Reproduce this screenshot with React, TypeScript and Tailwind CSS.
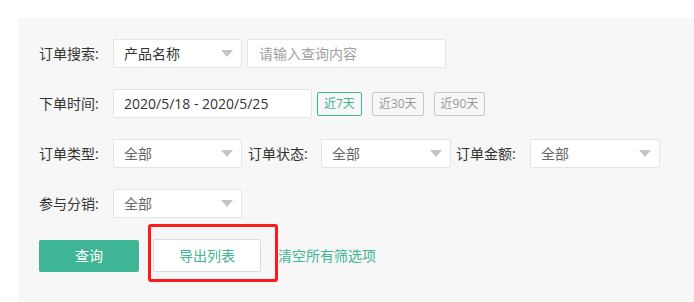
import { ReactNode } from "react";

const font = { fontFamily: '"Open Sans", "Noto Sans CJK SC", sans-serif' };

function Arrow() {
	return (
		<svg width="12" height="7" viewBox="0 0 12 7" className="shrink-0">
			<path d="M0 0 L12 0 L6 7 Z" fill="#c4c4c4" />
		</svg>
	);
}

function Select({ value, dark = false, wide = false }: { value: string; dark?: boolean; wide?: boolean }) {
	return (
		<div
			className={`flex h-[29px] shrink-0 items-center justify-between rounded-[2px] border border-[#e5e5e5] bg-white pl-[10px] pr-[8px] ${
				wide ? "w-[130px]" : "w-[129px]"
			}`}
		>
			<span className={dark ? "text-[#333]" : "text-[#666]"}>{value}</span>
			<Arrow />
		</div>
	);
}

function Label({ children, className = "" }: { children: ReactNode; className?: string }) {
	return <div className={`shrink-0 text-[#333] ${className}`}>{children}</div>;
}

function Quick({ text, active = false }: { text: string; active?: boolean }) {
	return (
		<div
			className={
				active
					? "flex h-[24px] items-center justify-center rounded-[2px] border border-[#3eb595] px-[6px] text-[12px] text-[#3eb595]"
					: "flex h-[24px] items-center justify-center rounded-[2px] border border-[#c8c8c8] px-[6px] text-[12px] text-[#999]"
			}
		>
			{text}
		</div>
	);
}

export default function App() {
	return (
		<div className="h-[302px] w-[694px] overflow-hidden bg-white text-[14px]" style={font}>
			<div className="ml-[19px] mt-[18px] flex h-[284px] flex-col gap-[21px] bg-[#f7f7f7] pl-[20px] pt-[21px]">
				{/* 订单搜索 */}
				<div className="flex h-[29px] items-center">
					<Label className="w-[74px]">订单搜索:</Label>
					<Select value="产品名称" dark />
					<div className="ml-[5px] flex h-[29px] w-[199px] items-center rounded-[2px] border border-[#e5e5e5] bg-white pl-[11px] text-[#a0a0a0]">
						请输入查询内容
					</div>
				</div>

				{/* 下单时间 */}
				<div className="flex h-[29px] items-center">
					<Label className="w-[74px]">下单时间:</Label>
					<div className="flex h-[29px] w-[199px] items-center rounded-[2px] border border-[#e5e5e5] bg-white pl-[10px] text-[#333]">
						2020/5/18 - 2020/5/25
					</div>
					<div className="ml-[5px] flex items-center gap-[10px]">
						<Quick text="近7天" active />
						<Quick text="近30天" />
						<Quick text="近90天" />
					</div>
				</div>

				{/* 类型 / 状态 / 金额 */}
				<div className="flex h-[29px] items-center">
					<Label className="w-[74px]">订单类型:</Label>
					<Select value="全部" />
					<Label className="ml-[6px] w-[73px]">订单状态:</Label>
					<Select value="全部" wide />
					<Label className="ml-[5px] w-[74px]">订单金额:</Label>
					<Select value="全部" wide />
				</div>

				{/* 参与分销 */}
				<div className="flex h-[29px] items-center">
					<Label className="w-[74px]">参与分销:</Label>
					<Select value="全部" />
				</div>

				{/* buttons */}
				<div className="flex items-center">
					<button className="h-[32px] w-[100px] rounded-[2px] bg-[#3eb595] text-white">查询</button>
					<div className="relative ml-[14px]">
						<button className="h-[33px] w-[108px] rounded-[2px] border border-[#dcdcdc] bg-white text-[#3eb595]">
							导出列表
						</button>
						<span className="pointer-events-none absolute left-[-5px] top-[-15px] h-[58px] w-[130px] rounded-[3px] border-[3px] border-[#ff1a1a]" />
					</div>
					<span className="ml-[17px] text-[#3eb595]">清空所有筛选项</span>
				</div>
			</div>
		</div>
	);
}
